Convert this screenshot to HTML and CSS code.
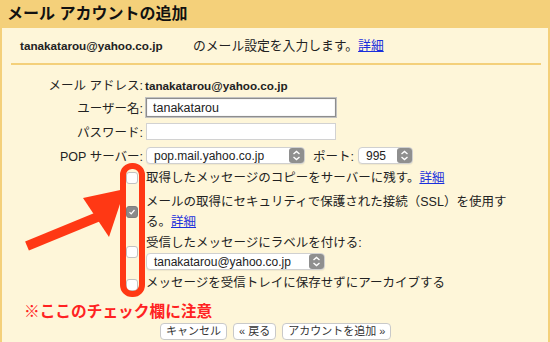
FILE: index.html
```html
<!DOCTYPE html>
<html lang="ja">
<head>
  <meta charset="UTF-8">
  <title>メール アカウントの追加</title>
  <link rel="stylesheet" href="styles.css">
</head>
<body>
  <div class="header">メール アカウントの追加</div>
  <div class="panel">
    <div class="intro"><b class="intro-mail">tanakatarou@yahoo.co.jp</b>のメール設定を入力します。<a href="#">詳細</a></div>
    <div class="sep"></div>

    <div class="form">
      <div class="row row-mail">
        <div class="lbl">メール アドレス:</div>
        <b class="mail-val">tanakatarou@yahoo.co.jp</b>
      </div>
      <div class="row row-user">
        <div class="lbl">ユーザー名:</div>
        <input class="text-in focus" type="text" value="tanakatarou">
      </div>
      <div class="row row-pass">
        <div class="lbl">パスワード:</div>
        <input class="text-in" type="password">
      </div>
      <div class="row row-pop">
        <div class="lbl">POP サーバー:</div>
        <div class="select sel-pop">
          <span>pop.mail.yahoo.co.jp</span>
          <svg viewBox="0 0 15 15"><rect width="15" height="15" rx="3"/><path d="M4.5 6 7.5 3.5 10.5 6M4.5 9 7.5 11.5 10.5 9"/></svg>
        </div>
        <span class="port-lbl">ポート:</span>
        <div class="select sel-port">
          <span>995</span>
          <svg viewBox="0 0 15 15"><rect width="15" height="15" rx="3"/><path d="M4.5 6 7.5 3.5 10.5 6M4.5 9 7.5 11.5 10.5 9"/></svg>
        </div>
      </div>

      <div class="cb-row cb1">
        <div class="cb-col"><span class="cb"></span></div>
        <div class="cb-text">取得したメッセージのコピーをサーバーに残す。<a href="#">詳細</a></div>
      </div>
      <div class="cb-row cb2">
        <div class="cb-col"><span class="cb on"><svg viewBox="0 0 12 12"><path d="M3 6.2 5 8.3 9 3.6"/></svg></span></div>
        <div class="cb-text">メールの取得にセキュリティで保護された接続（SSL）を使用す<br>る。<a href="#">詳細</a></div>
      </div>
      <div class="cb-row cb3">
        <div class="cb-col"><span class="cb"></span></div>
        <div class="cb-text">
          受信したメッセージにラベルを付ける:
          <div class="select sel-label">
            <span>tanakatarou@yahoo.co.jp</span>
            <svg viewBox="0 0 15 15"><rect width="15" height="15" rx="3"/><path d="M4.5 6 7.5 3.5 10.5 6M4.5 9 7.5 11.5 10.5 9"/></svg>
          </div>
        </div>
      </div>
      <div class="cb-row cb4">
        <div class="cb-col"><span class="cb"></span></div>
        <div class="cb-text">メッセージを受信トレイに保存せずにアーカイブする</div>
      </div>
    </div>

    <div class="note">※ここのチェック欄に注意</div>
    <div class="buttons">
      <button type="button" class="btn">キャンセル</button>
      <button type="button" class="btn">« 戻る</button>
      <button type="button" class="btn">アカウントを追加 »</button>
    </div>
  </div>

  <!-- red annotation drawn over the form -->
  <svg class="marks" viewBox="0 0 550 342">
    <rect x="123" y="166" width="19" height="128" rx="9"/>
    <line x1="27" y1="246" x2="100" y2="216"/>
    <polygon points="83,198 125,189 109,237"/>
  </svg>
</body>
</html>
```

FILE: styles.css
```css
body { margin: 0; width: 550px; height: 342px; overflow: hidden; position: relative; font-family: "Liberation Sans", "Noto Sans CJK JP", sans-serif; font-size: 12.5px; color: #222; background: #fef6d9; }
a { color: #1a2fdc; }

.header { height: 28px; line-height: 28px; padding-left: 7px; background: #f4d07a; font-size: 16px; font-weight: bold; color: #111; }
.panel { height: 314px; box-sizing: border-box; border-left: 2px solid #f4d07a; border-right: 2px solid #f4d07a; background: #fef6d9; }

.intro { padding: 9px 0 0 18px; height: 18px; line-height: 18px; font-size: 12.8px; }
.intro-mail { display: inline-block; width: 173px; font-size: 11.7px; }
.sep { margin: 8px 7px 0 9px; height: 2px; background: #f4d07a; }

.form { padding-top: 13px; }
.row { display: flex; align-items: center; }
.lbl { width: 143px; flex: none; text-align: right; padding-right: 2px; box-sizing: border-box; }
.row-mail { height: 16px; line-height: 16px; }
.mail-val { font-size: 11.7px; }
.row-user { margin-top: 4px; height: 19px; }
.row-pass { margin-top: 6px; height: 17px; }
.row-pop { margin-top: 7px; height: 17px; }

.text-in { margin: 0 0 0 1px; width: 190px; height: 17px; box-sizing: border-box; border: 1px solid #d2d2d2; padding: 0 6px; font: 12.5px "Liberation Sans", sans-serif; color: #222; background: #fff; outline: none; }
.text-in.focus { height: 19px; border-color: #8d8d8d; box-shadow: 0 0 0 1px #c2c2c2, inset 0 0 1px #aaa; }

.select { display: flex; align-items: center; justify-content: space-between; height: 17px; box-sizing: border-box; border: 1px solid #d0d0d0; border-radius: 4px; background: #fff; padding-left: 7px; box-shadow: 0 1px 1px rgba(0,0,0,.06); font-size: 12px; }
.select svg { width: 15px; height: 15px; flex: none; }
.select rect { fill: #8f8f8f; }
.select path { fill: none; stroke: #fff; stroke-width: 1.4; }
.sel-pop { margin-left: 1px; width: 159px; }
.port-lbl { margin-left: 8px; }
.sel-port { margin-left: 4px; width: 55px; }

.cb-row { display: flex; }
.cb-col { width: 143px; flex: none; display: flex; justify-content: flex-end; align-items: center; padding-right: 7px; box-sizing: border-box; }
.cb { display: block; width: 12px; height: 12px; box-sizing: border-box; border: 1px solid #c2c2c2; border-radius: 3px; background: #fff; }
.cb.on { background: #8a8a8a; border-color: #7e7e7e; }
.cb svg { display: block; width: 10px; height: 10px; }
.cb path { fill: none; stroke: #fff; stroke-width: 1.5; }
.cb-text { margin-left: 1px; line-height: 18px; }
.cb1 { margin-top: 5px; }
.cb2 { margin-top: 5px; }
.cb2 .cb-text { line-height: 20px; }
.cb3 { margin-top: 2px; }
.sel-label { margin-top: 1px; width: 179px; }
.cb4 { margin-top: 4px; }
.cb4 .cb { margin-top: 4px; }

.note { margin-top: 11px; padding-left: 22px; height: 18px; line-height: 18px; font-size: 15.7px; font-weight: bold; color: #f22; }
.buttons { margin-top: 2px; padding-left: 158px; display: flex; gap: 6px; }
.btn { height: 17px; padding: 0 5px; border: 1px solid #c9c9c9; border-radius: 4px; background: #fff; font: 11px "Liberation Sans", "Noto Sans CJK JP", sans-serif; color: #333; line-height: 15px; }

.marks { position: absolute; top: 0; left: 0; width: 550px; height: 342px; pointer-events: none; }
.marks rect { fill: none; stroke: #ff3814; stroke-width: 6; }
.marks line { stroke: #ff3814; stroke-width: 10; }
.marks polygon { fill: #ff3814; }
```
